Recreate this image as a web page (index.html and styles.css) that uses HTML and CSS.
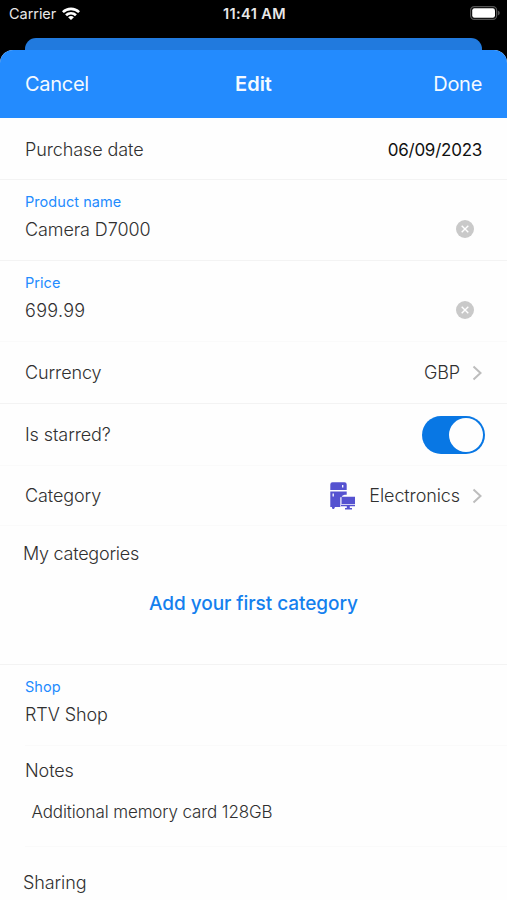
FILE: index.html
```html
<!DOCTYPE html>
<html lang="en">
<head>
<meta charset="utf-8">
<title>Edit</title>
<link rel="stylesheet" href="styles.css">
</head>
<body>
<div class="status">
  <div class="carrier"><span class="carrier-name">Carrier</span>
    <svg class="wifi" viewBox="0 0 18 13"><path d="M0 4.2a13 13 0 0 1 18 0l-1.8 1.9a10.3 10.3 0 0 0-14.4 0zM3.1 7.3a8.5 8.5 0 0 1 11.8 0L13 9.2a5.8 5.8 0 0 0-8 0zM6.1 10.3a4.2 4.2 0 0 1 5.8 0L9 13z"/></svg>
  </div>
  <span class="time">11:41 AM</span>
  <svg class="battery" viewBox="0 0 30 14"><rect x=".6" y=".6" width="26" height="12.8" rx="3.6"/><path class="cap" d="M27.8 4.6q2 .8 2 2.4t-2 2.4z"/><rect class="charge" x="2.2" y="2.2" width="22.8" height="9.6" rx="2.2"/></svg>
</div>
<div class="behind"></div>
<main class="sheet">
  <header class="nav"><span class="cancel">Cancel</span><h1>Edit</h1><span class="done">Done</span></header>
  <section class="row date"><span class="label">Purchase date</span><span class="date-value">06/09/2023</span></section>
  <section class="row field"><div><span class="caption">Product name</span><span class="label">Camera D7000</span></div>
    <svg class="clear" viewBox="0 0 18 18"><circle cx="9" cy="9" r="9"/><path d="M5.7 5.7l6.6 6.6M12.3 5.7l-6.6 6.6"/></svg></section>
  <section class="row field price"><div><span class="caption">Price</span><span class="label amount">699.99</span></div>
    <svg class="clear" viewBox="0 0 18 18"><circle cx="9" cy="9" r="9"/><path d="M5.7 5.7l6.6 6.6M12.3 5.7l-6.6 6.6"/></svg></section>
  <section class="row currency"><span class="label">Currency</span><span class="choice"><span class="label">GBP</span><svg class="chevron" viewBox="0 0 10 16"><path d="M1.5 1.5L8.5 8l-7 6.5"/></svg></span></section>
  <section class="row starred"><span class="label">Is starred?</span><span class="toggle"></span></section>
  <section class="row category"><span class="label">Category</span><span class="choice">
    <svg class="appliance" viewBox="0 0 25 28"><path d="M.3 8V2.500Q.3.300 2.500.300h12q2.200 0 2.200 2.200V8zM.3 9.500h16.400v3.300h-2q-2.500 0-3.200 2.500h-1.200V25H5l-1 2H2.500l-.7-2H.3z"/><path class="cut" d="M12.700 3v2.500M3.200 11.500v3"/><path d="M11.500 14.800H25V22H11.500zM11 22.800h14v1.500H11zM16.800 24h3v2H22v1.500h-7V26h1.800z"/></svg>
    <span class="label">Electronics</span><svg class="chevron" viewBox="0 0 10 16"><path d="M1.5 1.5L8.5 8l-7 6.5"/></svg></span></section>
  <section class="mine"><span class="label">My categories</span><a class="add">Add your first category</a></section>
  <section class="row shop"><div><span class="caption">Shop</span><span class="label">RTV Shop</span></div></section>
  <section class="notes"><span class="label">Notes</span><p class="memo">Additional memory card 128GB</p></section>
  <section class="sharing"><span class="label">Sharing</span></section>
</main>
</body>
</html>
```
FILE: styles.css
```css
* { box-sizing: border-box; }
body { margin: 0; width: 507px; height: 900px; overflow: hidden; background: #000; font-family: Inter, "Liberation Sans", sans-serif; color: #303030; }
span, h1, a { white-space: nowrap; }
.status { height: 38px; display: grid; grid-template-columns: 1fr auto 1fr; align-items: start; padding: 5px 7px 0 9px; color: #e8e8e8; }
.carrier { display: flex; align-items: center; gap: 6px; font-size: 14.5px; line-height: 18px; letter-spacing: -0.05px; }
.wifi { width: 18px; height: 13px; fill: #fff; margin-top: -2px; }
.time { font-size: 14.5px; line-height: 18px; font-weight: 600; letter-spacing: 0.4px; }
.battery { width: 30px; height: 14px; margin-top: 1px; justify-self: end; fill: none; stroke: #555; stroke-width: 1.2; }
.battery .cap { fill: #555; stroke: none; }
.battery .charge { fill: #fff; stroke: none; }
.behind { height: 12px; margin: 0 25px; background: #217ade; border-radius: 11px 11px 0 0; }
.sheet { height: 850px; background: #fefefe; border-radius: 13px 13px 0 0; overflow: hidden; }
.nav { height: 68px; background: #238bfe; color: #f4faff; display: grid; grid-template-columns: 1fr auto 1fr; align-items: center; padding: 0 25px; font-size: 20px; letter-spacing: -0.3px; }
.nav h1 { font-size: 20px; font-weight: 600; margin: 0; letter-spacing: 0; }
.done { justify-self: end; }
.row { display: flex; justify-content: space-between; align-items: center; padding: 0 25px; border-bottom: 1px solid #f3f3f3; }
.label { font-size: 18px; line-height: 24px; font-weight: 350; letter-spacing: -0.1px; }
.date { height: 62px; padding-top: 2px; }
.date-value { font-size: 17px; letter-spacing: -0.25px; color: #111; }
.field { height: 81px; padding-right: 33px; }
.field > div, .shop > div { display: flex; flex-direction: column; gap: 7px; margin-top: -5px; }
.caption { font-size: 14.5px; line-height: 18px; letter-spacing: 0.05px; color: #238bfe; }
.amount { letter-spacing: 0.3px; }
.clear { width: 18px; height: 18px; margin-top: 18px; fill: #c9c9c9; }
.clear path { stroke: #fff; stroke-width: 1.4; }
.choice { display: flex; align-items: center; }
.chevron { width: 10px; height: 16px; margin-left: 12px; fill: none; stroke: #bdbdbd; stroke-width: 2; }
.price, .starred, .category { border-color: #fafafa; }
.currency { height: 62px; padding-top: 1px; }
.starred { height: 62px; padding-right: 22px; }
.category { height: 60px; }
.toggle { width: 63px; height: 38px; border-radius: 19px; background: #0877e4; padding: 2px; display: flex; justify-content: flex-end; }
.toggle::after { content: ""; width: 34px; height: 34px; border-radius: 50%; background: #fefefe; }
.appliance { width: 25px; height: 28px; margin-right: 14px; fill: #5552d0; }
.appliance .cut { stroke: #fff; stroke-width: 1.3; }
.mine { height: 139px; border-bottom: 1px solid #f3f3f3; padding: 16px 23px; display: flex; flex-direction: column; }
.mine .label { letter-spacing: -0.25px; }
.add { align-self: center; font-size: 19px; line-height: 26px; font-weight: 500; letter-spacing: -0.06px; color: #1480ee; margin-top: 25px; }
.shop { height: 80px; border: 0; }
.notes { height: 102px; margin-left: 25px; border-top: 1px solid #fafafa; border-bottom: 1px solid #fafafa; padding-top: 13px; }
.memo { margin: 17px 0 0 6.5px; font-size: 17px; line-height: 24px; font-weight: 350; letter-spacing: -0.12px; }
.sharing { padding: 24px 23px; }
```
